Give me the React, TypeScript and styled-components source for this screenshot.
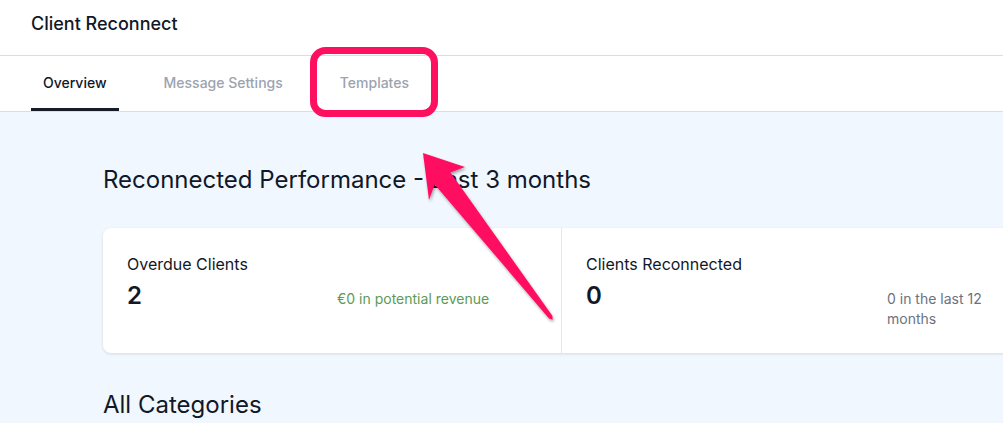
import React from "react";
import styled, { createGlobalStyle } from "styled-components";

const Global = createGlobalStyle`
  html, body { margin: 0; padding: 0; }
  body {
    font-family: Inter, "Noto Sans", sans-serif;
    color: #111827;
    background: #f0f7fe;
    overflow: hidden;
  }
`;

const Page = styled.div`
  position: relative;
  width: 1003px;
  height: 423px;
  overflow: hidden;
  background: #f0f7fe;
`;

const Header = styled.header`
  height: 55px;
  display: flex;
  align-items: center;
  padding: 0 0 8px 31px;
  box-sizing: border-box;
  background: #fff;
  border-bottom: 1px solid #cfe0f2;
  font-size: 18px;
  font-weight: 500;
  color: #111827;
  height: 56px;
`;

const TabBar = styled.nav`
  height: 55px;
  display: flex;
  gap: 33px;
  padding-left: 31px;
  background: #fff;
  border-bottom: 1px solid #cfe0f2;
  box-sizing: content-box;
`;

const Tab = styled.div<{ $active?: boolean }>`
  height: 55px;
  padding: 0 12px;
  display: flex;
  align-items: center;
  box-sizing: border-box;
  font-size: 14px;
  font-weight: 500;
  color: ${(p) => (p.$active ? "#111827" : "#9ca3af")};
  border-bottom: 3px solid ${(p) => (p.$active ? "#161b26" : "transparent")};
`;

const Main = styled.main`
  padding: 52px 0 0 103px;
`;

const SectionTitle = styled.h2<{ $gap?: number }>`
  margin: ${(p) => p.$gap ?? 0}px 0 0;
  font-size: 24px;
  line-height: 32px;
  font-weight: 400;
  color: #111827;
  white-space: nowrap;
`;

const Card = styled.div`
  margin-top: 32px;
  display: grid;
  grid-template-columns: 458px 458px;
  width: 917px;
  background: #fff;
  border-radius: 8px;
  box-shadow: 0 1px 3px rgba(15, 23, 42, 0.12);
`;

const Stat = styled.div<{ $divider?: boolean }>`
  padding: 24px;
  border-left: ${(p) => (p.$divider ? "1px solid #e5e7eb" : "none")};
`;

const StatLabel = styled.div`
  font-size: 16px;
  line-height: 24px;
  color: #111827;
`;

const StatRow = styled.div`
  display: flex;
  margin-top: 4px;
`;

const StatValue = styled.div`
  flex: 1;
  font-size: 24px;
  line-height: 32px;
  font-weight: 600;
  color: #111827;
`;

const StatDetail = styled.div<{ $width: number; $tone: "green" | "gray" }>`
  width: ${(p) => p.$width}px;
  padding-top: 9px;
  font-size: 14px;
  line-height: 20px;
  font-weight: 400;
  color: ${(p) => (p.$tone === "green" ? "#5d9a55" : "#6b7280")};
`;

const Overlay = styled.svg`
  position: absolute;
  left: 0;
  top: 0;
  pointer-events: none;
`;

export default function App() {
  return (
    <Page>
      <Global />
      <Header>Client Reconnect</Header>
      <TabBar>
        <Tab $active>Overview</Tab>
        <Tab>Message Settings</Tab>
        <Tab>Templates</Tab>
      </TabBar>
      <Main>
        <SectionTitle>Reconnected Performance - Last 3 months</SectionTitle>
        <Card>
          <Stat>
            <StatLabel>Overdue Clients</StatLabel>
            <StatRow>
              <StatValue>2</StatValue>
              <StatDetail $width={200} $tone="green">
                €0 in potential revenue
              </StatDetail>
            </StatRow>
          </Stat>
          <Stat $divider>
            <StatLabel>Clients Reconnected</StatLabel>
            <StatRow>
              <StatValue>0</StatValue>
              <StatDetail $width={108} $tone="gray">
                0 in the last 12 months
              </StatDetail>
            </StatRow>
          </Stat>
        </Card>
        <SectionTitle $gap={36}>All Categories</SectionTitle>
      </Main>
      <Overlay width="1003" height="423" viewBox="0 0 1003 423">
        <defs>
          <filter id="sh" x="-20%" y="-20%" width="140%" height="140%">
            <feDropShadow dx="1" dy="2" stdDeviation="1.5" floodColor="#000" floodOpacity="0.35" />
          </filter>
        </defs>
        <rect
          x="313.5"
          y="50.5"
          width="121"
          height="63"
          rx="12"
          fill="none"
          stroke="#fe1060"
          strokeWidth="7"
        />
        <polygon
          filter="url(#sh)"
          fill="#fe1060"
          points="423,153 465,167 450.5,172.5 552.5,316 552.6,319.7 549,318.5 434.7,184.4 429,200"
        />
      </Overlay>
    </Page>
  );
}
